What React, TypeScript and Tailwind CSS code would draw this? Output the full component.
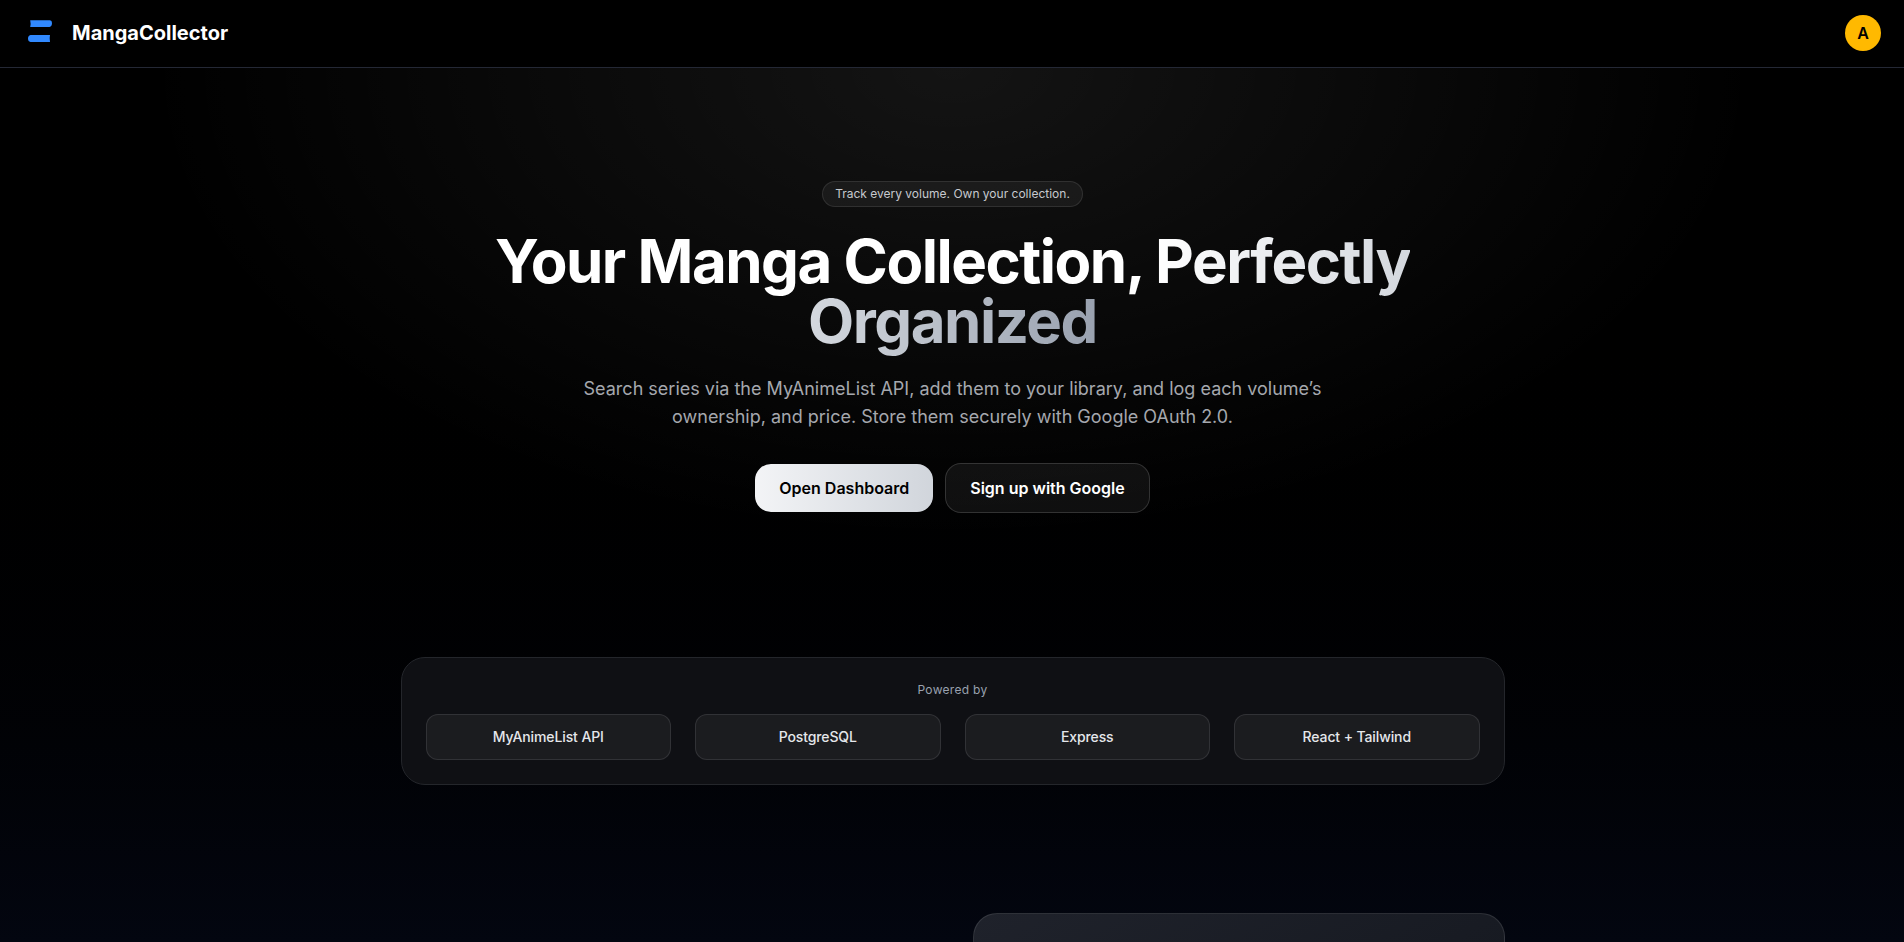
const technologies = ["MyAnimeList API", "PostgreSQL", "Express", "React + Tailwind"];

function Logo() {
  return (
    <svg viewBox="0 0 32 32" className="-mt-1 h-8 w-8" fill="#3189ff" aria-hidden="true">
      <path d="M6.200 5.300H26Q28 5.500 28 8Q28 11.600 25.500 12H6.200Q7 8.600 6.200 5.300Z" />
      <path d="M6.500 20H26Q25.300 23.400 26 27H6.500Q4 26.500 4 23.500Q4 20.500 6.500 20Z" />
    </svg>
  );
}

function Header() {
  return (
    <header className="flex h-[68px] shrink-0 items-center justify-between border-b border-[#242835] bg-black px-6 pb-px">
      <div className="flex items-center gap-4">
        <Logo />
        <span className="text-xl leading-7 font-bold text-white">MangaCollector</span>
      </div>
      <div className="flex h-9 w-9 items-center justify-center rounded-full bg-[#ffb900] text-base font-semibold text-black">
        A
      </div>
    </header>
  );
}

function Hero() {
  return (
    <section className="flex h-[557px] flex-col items-center bg-[radial-gradient(ellipse_at_top,rgba(255,255,255,0.08),transparent_60%)] px-6 pt-[113px] text-center">
      <span className="rounded-full border border-white/10 bg-white/5 px-3 py-1 text-xs text-[#c6c9ce]">
        Track every volume. Own your collection.
      </span>
      <h1 className="mt-6 max-w-5xl text-6xl leading-none font-bold tracking-tight text-white">
        Your Manga Collection,{" "}
        <span className="bg-linear-to-r from-white via-gray-300 to-gray-400 bg-clip-text text-transparent">
          Perfectly Organized
        </span>
      </h1>
      <p className="mt-6 max-w-3xl text-lg leading-7 text-[#a5a8ae]">
        Search series via the MyAnimeList API, add them to your library, and log each volume’s ownership, and price.
        Store them securely with Google OAuth 2.0.
      </p>
      <div className="mt-8 flex items-center gap-3">
        <button className="rounded-2xl bg-linear-to-r from-gray-100 to-gray-300 px-6 py-3 font-semibold text-black">
          Open Dashboard
        </button>
        <button className="rounded-2xl border border-white/15 bg-white/6 px-6 py-3 font-semibold text-white">
          Sign up with Google
        </button>
      </div>
    </section>
  );
}

function PoweredBy() {
  return (
    <section className="mt-8 rounded-3xl border border-[#24262b] bg-[#0f1014] p-6">
      <p className="text-center text-xs tracking-wide text-gray-400">Powered by</p>
      <div className="mt-4 grid grid-cols-4 gap-6">
        {technologies.map((name) => (
          <div
            key={name}
            className="rounded-xl border border-white/10 bg-white/5 px-4 py-3 text-center text-sm font-medium tracking-[-0.008em] text-gray-200"
          >
            {name}
          </div>
        ))}
      </div>
    </section>
  );
}

export default function App() {
  return (
    <div className="h-[942px] w-full overflow-hidden bg-black font-['Inter',sans-serif]">
      <div className="flex h-full w-[1905px] flex-col bg-linear-to-b from-black from-30% to-[#030610]">
        <Header />
        <main>
          <Hero />
          <div className="mx-auto w-full max-w-6xl px-6">
            <PoweredBy />
            <section className="mt-32 grid grid-cols-2 gap-10">
              <div />
              <div className="h-80 rounded-3xl border border-white/10 bg-linear-to-br from-[#1f222b] to-[#11141b]" />
            </section>
          </div>
        </main>
      </div>
    </div>
  );
}
